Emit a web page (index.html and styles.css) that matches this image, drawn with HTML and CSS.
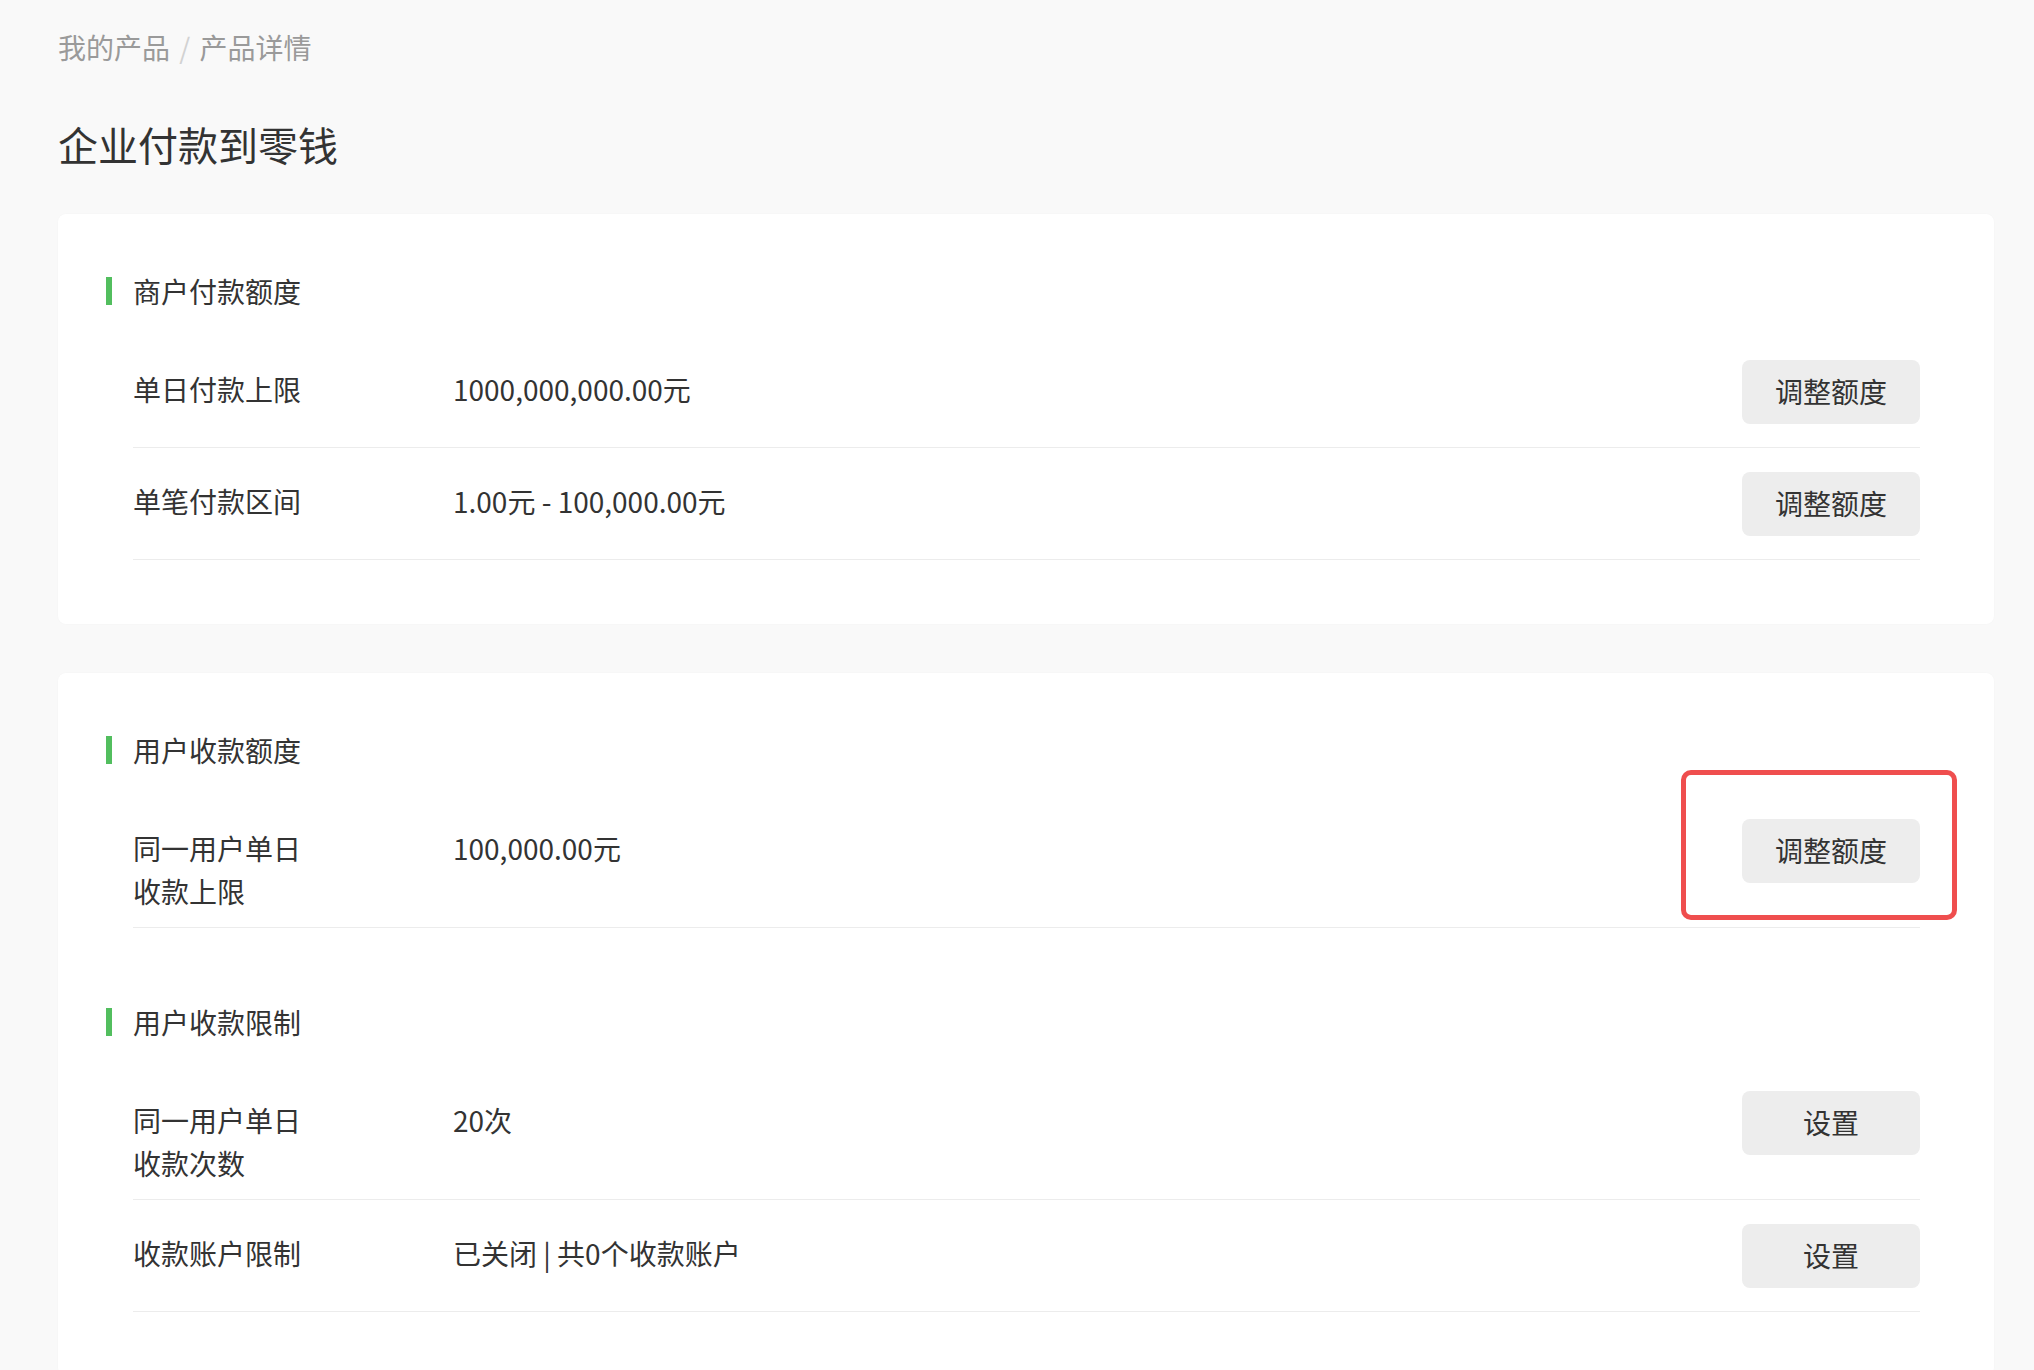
FILE: index.html
```html
<!DOCTYPE html>
<html lang="zh-CN">
<head>
    <meta charset="UTF-8">
    <meta name="viewport" content="width=device-width, initial-scale=1.0">
    <title>企业付款到零钱</title>
    <link rel="stylesheet" href="styles.css">
</head>
<body>
    <div class="breadcrumb">
        <span class="crumb">我的产品</span>
        <span class="sep">/</span>
        <span class="crumb">产品详情</span>
    </div>

    <h1 class="page-title">企业付款到零钱</h1>

    <div class="card">
        <div class="section">
            <div class="section-title">商户付款额度</div>
            <div class="row">
                <div class="label">单日付款上限</div>
                <div class="value">1000,000,000.00元</div>
                <div class="action"><button class="btn">调整额度</button></div>
            </div>
            <div class="row">
                <div class="label">单笔付款区间</div>
                <div class="value">1.00元 - 100,000.00元</div>
                <div class="action"><button class="btn">调整额度</button></div>
            </div>
        </div>
    </div>

    <div class="card">
        <div class="section">
            <div class="section-title">用户收款额度</div>
            <div class="row">
                <div class="label">同一用户单日<br>收款上限</div>
                <div class="value">100,000.00元</div>
                <div class="action">
                    <button class="btn">调整额度</button>
                    <!-- highlight box drawn over the button -->
                    <div class="highlight"></div>
                </div>
            </div>
        </div>
        <div class="section">
            <div class="section-title">用户收款限制</div>
            <div class="row">
                <div class="label">同一用户单日<br>收款次数</div>
                <div class="value">20次</div>
                <div class="action"><button class="btn">设置</button></div>
            </div>
            <div class="row">
                <div class="label">收款账户限制</div>
                <div class="value">已关闭 | 共0个收款账户</div>
                <div class="action"><button class="btn">设置</button></div>
            </div>
        </div>
    </div>
</body>
</html>
```

FILE: styles.css
```css
body {
    margin: 0;
    padding: 26px 40px 49px 58px;
    background-color: #f9f9f9;
    font-family: "Noto Sans CJK SC", "Noto Sans", sans-serif;
    color: #333;
}
.breadcrumb {
    font-size: 28px;
    line-height: 42px;
    color: #9a9a9a;
}
.sep {
    color: #d2d2d2;
    margin: 0 3px;
}
.page-title {
    font-size: 40px;
    font-weight: 400;
    line-height: 56px;
    color: #333;
    margin: 48px 0 42px;
}
.card {
    background-color: #fff;
    border-radius: 8px;
    box-shadow: 0 0 2px rgba(0,0,0,0.03);
    padding: 56px 74px 64px 48px;
    margin-bottom: 49px;
}
.section + .section {
    margin-top: 73px;
}
.section-title {
    display: flex;
    align-items: center;
    font-size: 28px;
    line-height: 42px;
    margin-bottom: 24px;
}
.section-title::before {
    content: "";
    width: 6px;
    height: 28px;
    background-color: #52be5e;
    margin-right: 21px;
}
.row {
    display: flex;
    align-items: flex-start;
    margin-left: 27px;
    padding: 24px 0 14px;
    border-bottom: 1px solid #ececec;
    font-size: 28px;
}
.label {
    width: 320px;
    flex-shrink: 0;
    line-height: 43px;
    margin-top: 8px;
}
.value {
    flex: 1;
    line-height: 43px;
    margin-top: 8px;
}
.action {
    position: relative;
    margin-bottom: 9px;
}
.btn {
    display: block;
    width: 178px;
    height: 64px;
    border: none;
    border-radius: 8px;
    background-color: #ededed;
    color: #333;
    font-family: inherit;
    font-size: 28px;
    padding: 0 0 2px;
}
.highlight {
    position: absolute;
    top: -49px;
    left: -61px;
    right: -37px;
    bottom: -37px;
    border: 5px solid #ef4e4e;
    border-radius: 10px;
    pointer-events: none;
}
```
